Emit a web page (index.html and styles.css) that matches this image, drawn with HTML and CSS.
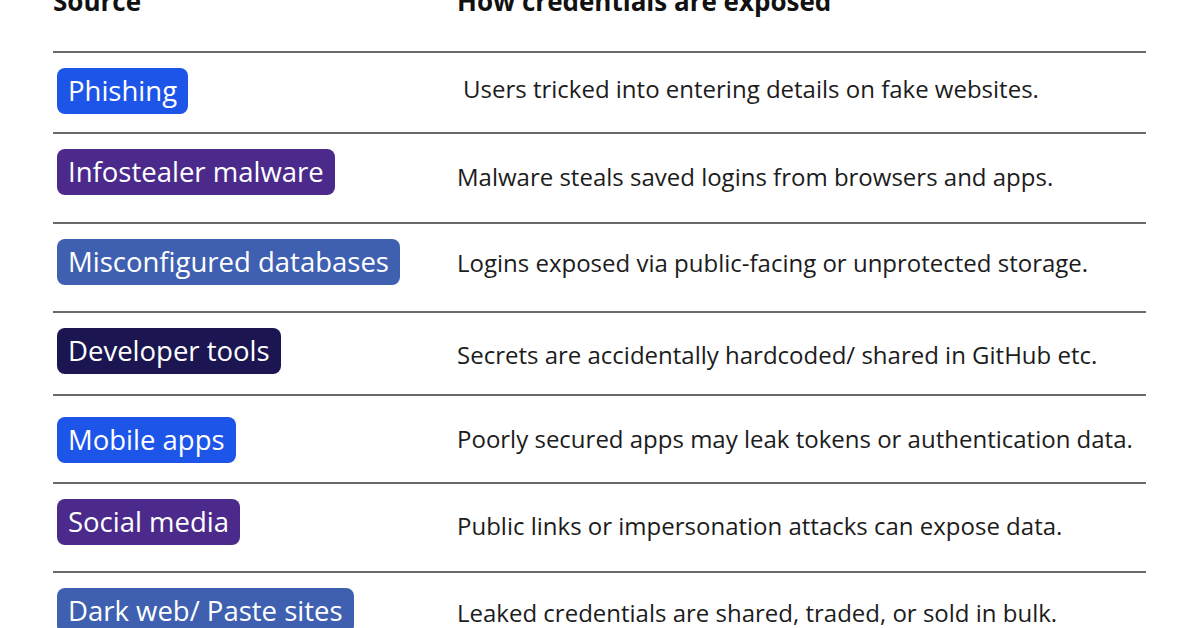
FILE: index.html
```html
<!DOCTYPE html>
<html lang="en">
<head>
<meta charset="utf-8">
<title>Credential exposure sources</title>
<link rel="stylesheet" href="styles.css">
</head>
<body>
<div class="table">
  <div class="head">
    <div class="hcell">Source</div>
    <div class="hcell">How credentials are exposed</div>
  </div>
  <div class="row">
    <div class="src"><span class="badge blue">Phishing</span></div>
    <div class="desc indent">Users tricked into entering details on fake websites.</div>
  </div>
  <div class="row">
    <div class="src"><span class="badge purple">Infostealer malware</span></div>
    <div class="desc">Malware steals saved logins from browsers and apps.</div>
  </div>
  <div class="row">
    <div class="src"><span class="badge steel">Misconfigured databases</span></div>
    <div class="desc">Logins exposed via public-facing or unprotected storage.</div>
  </div>
  <div class="row">
    <div class="src"><span class="badge navy">Developer tools</span></div>
    <div class="desc">Secrets are accidentally hardcoded/ shared in GitHub etc.</div>
  </div>
  <div class="row">
    <div class="src"><span class="badge blue">Mobile apps</span></div>
    <div class="desc">Poorly secured apps may leak tokens or authentication data.</div>
  </div>
  <div class="row">
    <div class="src"><span class="badge purple">Social media</span></div>
    <div class="desc">Public links or impersonation attacks can expose data.</div>
  </div>
  <div class="row">
    <div class="src"><span class="badge steel">Dark web/ Paste sites</span></div>
    <div class="desc">Leaked credentials are shared, traded, or sold in bulk.</div>
  </div>
</div>
</body>
</html>
```

FILE: styles.css
```css
html, body {
  margin: 0;
  padding: 0;
  background: #ffffff;
  overflow: hidden;
}

body {
  font-family: "Open Sans", "Noto Sans", "Liberation Sans", sans-serif;
  color: #1c1c1c;
}

.table {
  width: 1093px;
  margin-left: 53px;
  display: flex;
  flex-direction: column;
}

.head {
  display: grid;
  grid-template-columns: 404px 1fr;
  height: 51px;
  align-items: start;
}

.hcell {
  font-weight: 700;
  font-size: 26px;
  line-height: 30px;
  margin-top: -14px;
  color: #111111;
}

.row {
  display: grid;
  grid-template-columns: 404px 1fr;
  border-top: 2px solid #6a6a6a;
  box-sizing: border-box;
}

.row:nth-child(2) { height: 81px; }
.row:nth-child(3) { height: 90px; }
.row:nth-child(4) { height: 89px; }
.row:nth-child(5) { height: 83px; }
.row:nth-child(6) { height: 88px; }
.row:nth-child(7) { height: 89px; }
.row:nth-child(8) { height: 89px; }

.src {
  padding-left: 4px;
  padding-top: 15px;
}

.row:nth-child(6) .src { padding-top: 21px; }

.badge {
  display: inline-block;
  height: 46px;
  line-height: 46px;
  padding: 0 11px 0 11px;
  border-radius: 8px;
  color: #ffffff;
  font-size: 27.5px;
  font-weight: 400;
  white-space: nowrap;
}

.blue { background: #1d55e9; }
.purple { background: #4b2a8c; }
.steel { background: #3f5fb1; }
.navy { background: #1b1651; }

.desc {
  align-self: center;
  font-size: 24px;
  line-height: 30px;
  white-space: nowrap;
}

.row:nth-child(2) .desc { padding-bottom: 8px; }
.row:nth-child(3) .desc { padding-bottom: 2px; }
.row:nth-child(4) .desc { padding-bottom: 10px; }
.row:nth-child(5) .desc { padding-top: 2px; }
.row:nth-child(7) .desc { padding-bottom: 4px; }
.row:nth-child(8) .desc { padding-bottom: 8px; }

.indent { padding-left: 6px; }
```
